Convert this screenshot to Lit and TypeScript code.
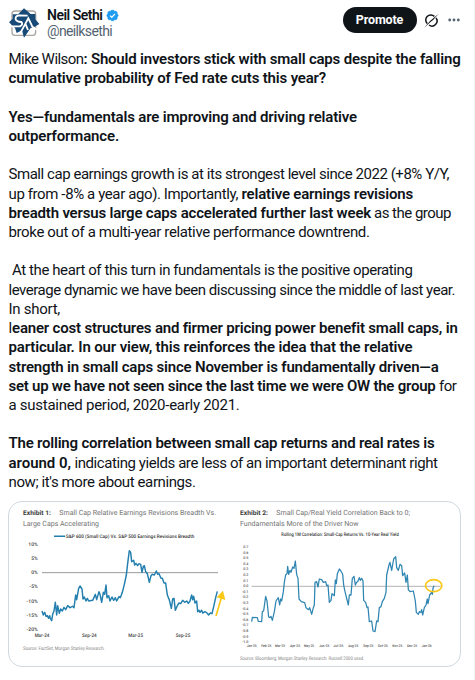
import { LitElement, html, svg, css } from "lit";
import { customElement } from "lit/decorators.js";

interface Run { t: string; w: number; b?: boolean; gap?: number }

const BODY = 15;
const BOLD = 600;
const FAMILY = 'Roboto, "Liberation Sans", sans-serif';
const pen = document.createElement("canvas").getContext("2d")!;

/** Letter spacing that sets a run to the given measure. */
function tracking(text: string, width: number, size: number, weight: number): string {
  pen.font = `${weight} ${size}px ${FAMILY}`;
  const natural = pen.measureText(text).width;
  return ((width - natural) / text.length).toFixed(3) + "px";
}

const LINES: Run[][] = [
  [{ t: "Mike Wilson", w: 75 }, { t: ": Should investors stick with small caps despite the falling", w: 377, b: true }],
  [{ t: "cumulative probability of Fed rate cuts this year?", w: 317.5, b: true }],
  [],
  [{ t: "Yes—fundamentals are improving and driving relative", w: 348.5, b: true }],
  [{ t: "outperformance.", w: 110.5, b: true }],
  [],
  [{ t: "Small cap earnings growth is at its strongest level since 2022 (+8% Y/Y,", w: 440.5 }],
  [{ t: "up from -8% a year ago). Importantly,", w: 229.5 }, { t: "relative earnings revisions", w: 171.5, b: true, gap: 3.5 }],
  [{ t: "breadth versus large caps accelerated further last week", w: 362.5, b: true }, { t: "as the group", w: 77, gap: 3 }],
  [{ t: "broke out of a multi-year relative performance downtrend.", w: 361 }],
  [],
  [{ t: "At the heart of this turn in fundamentals is the positive operating", w: 400.5, gap: 3.5 }],
  [{ t: "leverage dynamic we have been discussing since the middle of last year.", w: 446.5 }],
  [{ t: "In short,", w: 51.5 }],
  [{ t: "l", w: 3.5 }, { t: "eaner cost structures and firmer pricing power benefit small caps, in", w: 445, b: true }],
  [{ t: "particular. In our view, this reinforces the idea that the relative", w: 404, b: true }],
  [{ t: "strength in small caps since November is fundamentally driven—a", w: 430, b: true }],
  [{ t: "set up we have not seen since the last time we were OW the group", w: 427, b: true }, { t: "for", w: 17.5, gap: 3.5 }],
  [{ t: "a sustained period, 2020-early 2021.", w: 231 }],
  [],
  [{ t: "The rolling correlation between small cap returns and real rates is", w: 426, b: true }],
  [{ t: "around 0,", w: 62.5, b: true }, { t: "indicating yields are less of an important determinant right", w: 363, gap: 3.5 }],
  [{ t: "now; it's more about earnings.", w: 187 }],
];

const BREADTH =
  "126,348 130,360 134,352 138,364 142,362 146,370 149,362 151,370 155,377 158,358 162,348 166,322 170,360 173,332 178,355 182,342 187,348 192,337 197,344 203,332 210,338 218,334 222,338 227,300 230,314 236,280 240,273 246,282 249,312 253,306 258,318 262,310 266,318 278,316 286,298 290,314 297,290 300,298 305,322 310,292 314,298 318,270 321,308 326,302 330,318 336,306 341,316 346,308 350,318 357,305 361,308 367,292 373,268 379,240 383,205 388,167 392,172 395,200 401,196 404,210 408,205 413,212 417,206 422,208 426,232 430,214 433,212 437,230 442,236 448,262 453,242 457,238 463,240 469,228 473,238 477,236 483,250 487,250 492,264 497,264 502,300 508,315 514,340 518,312 522,310 526,346 532,332 537,324 542,326 548,316 554,322 560,318 565,325 570,318 575,300 578,314 581,304 585,324 590,318 593,350 597,346 600,352 605,346 608,354 615,350 621,354 626,360 631,354 636,356 641,335 647,308 652,289";

const CORRELATION =
  "755,380 757,367 772,368 775,379 785,380 787,350 791,347 797,304 801,318 806,366 810,368 813,364 817,376 823,350 828,318 835,308 839,330 842,312 845,318 850,290 853,262 857,240 861,236 863,214 866,238 870,226 873,232 878,216 882,220 886,198 890,238 894,250 897,312 904,320 914,323 918,338 926,344 929,338 935,358 940,338 943,330 945,262 950,260 954,276 958,252 965,254 970,262 977,260 980,272 984,270 988,322 993,316 996,296 1003,302 1006,255 1009,266 1012,236 1018,222 1024,230 1028,238 1031,270 1035,290 1045,330 1048,300 1053,300 1057,250 1062,244 1066,270 1070,262 1074,258 1078,248 1081,256 1085,250 1089,258 1091,316 1097,322 1101,338 1104,336 1108,380 1115,378 1119,408 1125,410 1130,378 1134,380 1138,338 1143,335 1147,320 1153,310 1158,292 1160,240 1167,210 1170,202 1175,226 1181,192 1187,185 1190,218 1195,226 1200,208 1205,212 1208,242 1214,234 1218,262 1222,240 1225,284 1230,290 1240,288 1246,318 1249,352 1255,358 1258,350 1263,352 1265,344 1268,360 1273,338 1278,330 1282,312 1284,326 1289,300 1295,292 1297,298 1299,280 1302,272";

const MONTHS: [string, number][] = [
  ["Jan-25", 755], ["Feb-25", 799], ["Mar-25", 840], ["Apr-25", 885], ["May-25", 927], ["Jun-25", 973], ["Jul-25", 1015],
  ["Aug-25", 1060], ["Sep-25", 1105], ["Oct-25", 1148], ["Nov-25", 1192], ["Dec-25", 1236], ["Jan-26", 1280],
];

@customElement("exhibit-charts")
class ExhibitCharts extends LitElement {
  static styles = css`
    :host { display: block; }
    svg { display: block; width: 100%; height: 100%; }
    text { font-family: Roboto, "Liberation Sans", sans-serif; text-rendering: geometricPrecision; fill: #444; }
    .title { font-size: 21.5px; fill: #737373; }
    .lead { font-size: 19.5px; font-weight: 700; fill: #3c3c3c; }
    .key { font-size: 14.5px; font-weight: 500; fill: #333; }
    .tick { font-size: 15px; font-weight: 500; fill: #444; }
    .fine { font-size: 11px; font-weight: 500; fill: #555; }
    .note { font-size: 15px; fill: #858585; }
    .end { text-anchor: end; }
    .mid { text-anchor: middle; }
    .zero { stroke: #999; stroke-width: 3; }
    .zero.thin { stroke: #b4b4b4; }
    .series { fill: none; stroke: #227fae; stroke-width: 4.4; stroke-linejoin: round; }
    .series.thin { stroke: #3086b2; stroke-width: 3.8; }
    .mark { fill: none; stroke: #fac917; stroke-width: 5; }
    .head { fill: #fac917; }
  `;

  private label(cls: string, x: number, y: number, len: number, t: string) {
    return svg`<text class=${cls} x=${x} y=${y} textLength=${len} lengthAdjust="spacingAndGlyphs">${t}</text>`;
  }

  render() {
    return html`<svg viewBox="27 21 1353 492" preserveAspectRatio="none">
      ${this.label("lead", 69, 59, 84, "Exhibit 1:")}
      ${this.label("title", 178, 60, 470, "Small Cap Relative Earnings Revisions Breadth Vs.")}
      ${this.label("title", 69, 94, 228, "Large Caps Accelerating")}
      <line class="series" x1="162" y1="124" x2="196" y2="124" />
      ${this.label("key", 198, 128, 385, "S&P 600 (Small Cap) Vs. S&P 500 Earnings Revisions Breadth")}
      ${["10%", "5%", "0%", "-5%", "-10%", "-15%", "-20%"].map(
        (t, i) => svg`<text class="tick end" x="113" y=${152 + i * 42.7}>${t}</text>`)}
      <line class="zero" x1="126" y1="233" x2="654" y2="233" />
      <polyline class="series" points=${BREADTH} />
      ${[["Mar-24", 126], ["Sep-24", 268], ["Mar-25", 407], ["Sep-25", 549]].map(
        ([t, x]) => svg`<text class="tick mid" x=${x} y="427" textLength="44" lengthAdjust="spacingAndGlyphs">${t}</text>`)}
      <line class="mark" x1="648" y1="363" x2="664" y2="308" />
      <polygon class="head" points="669,287 676,315 650,307" />
      ${this.label("note", 69, 464, 245, "Source: FactSet, Morgan Stanley Research.")}

      ${this.label("lead", 720, 59, 84, "Exhibit 2:")}
      ${this.label("title", 829, 60, 401, "Small Cap/Real Yield Correlation Back to 0;")}
      ${this.label("title", 720, 94, 356, "Fundamentals More of the Driver Now")}
      ${this.label("key", 844, 124, 352, "Rolling 1M Correlation: Small-Cap Returns Vs. 10-Year Real Yield")}
      ${Array.from({ length: 18 }, (_, i) =>
        svg`<text class="fine end" x="745" y=${159 + i * 16.8}>${(0.7 - i / 10).toFixed(1).replace("-0.0", "0.0")}</text>`)}
      <line class="zero thin" x1="755" y1="274" x2="1323" y2="274" />
      <polyline class="series thin" points=${CORRELATION} />
      ${MONTHS.map(([t, x]) => svg`<text class="fine mid" x=${x} y="457" textLength="30" lengthAdjust="spacingAndGlyphs">${t}</text>`)}
      <ellipse class="mark" cx="1301" cy="272" rx="24.5" ry="18" />
      ${this.label("note", 720, 494, 373, "Source: Bloomberg, Morgan Stanley Research. Russell 2000 used.")}
    </svg>`;
  }
}

@customElement("app-root")
class AppRoot extends LitElement {
  static styles = css`
    :host {
      display: block; box-sizing: border-box; width: 475px; height: 680px; overflow: hidden;
      background: #fff; border-right: 1px solid #eff3f4; color: #0f1419;
      font-family: Roboto, "Liberation Sans", sans-serif;
    }
    header { display: flex; height: 50px; padding-left: 8px; box-sizing: border-box; }
    .avatar { width: 32px; height: 32px; margin-top: 7px; flex: none; }
    .who { display: flex; flex-direction: column; margin: 7px 0 0 7px; font-size: 14px; line-height: 16px; white-space: nowrap; }
    .name { display: flex; gap: 3px; align-items: center; font-weight: 600; height: 16px; }
    .name svg { width: 13px; height: 13px; }
    .handle { color: #536471; height: 16px; }
    .actions { display: flex; align-items: center; margin-left: auto; margin-right: 14px; height: 26px; margin-top: 7px; }
    .promote {
      width: 74px; height: 26px; border-radius: 13px; border: 0; padding: 0; background: #0f1419; color: #fff;
      display: flex; align-items: center; justify-content: center; font: 700 12.5px/26px Roboto, sans-serif;
    }
    .grok { width: 15px; height: 15px; margin-left: 7.5px; }
    .more { width: 12px; height: 4px; margin-left: 9px; }
    .line { display: flex; height: 19.23px; line-height: 19.23px; font-size: 15px; white-space: pre; padding-left: 8.5px; }
    .run { flex: none; }
    .b { font-weight: 600; }
    .media {
      margin: 8.7px 0 0 8px; box-sizing: border-box; width: 453px; height: 166px;
      border: 1px solid #cfd9de; border-radius: 14px; overflow: hidden;
    }
    .media exhibit-charts { height: 164px; }
  `;

  private run(r: Run) {
    const ls = tracking(r.t, r.w, BODY, r.b ? BOLD : 400);
    return html`<span class="run ${r.b ? "b" : ""}" style="letter-spacing:${ls};margin-left:${r.gap ?? 0}px">${r.t}</span>`;
  }

  render() {
    return html`
      <header>
        <svg class="avatar" viewBox="24 21 96 96">
          <rect x="36" y="33" width="71" height="73" rx="9" fill="#fff" stroke="#aaa6a1" stroke-width="4" />
          <path d="M72 25L92 42H106V58L118 72L103 81L92 84L72 113L66 91L50 99L45 84L27 67L38 56V43H54Z" fill="#184a78" />
          <path d="M83 47L57 46Q45 48 47 58Q50 65 64 66Q71 73 60 79L33 79" fill="none" stroke="#fff" stroke-width="5.5" />
          <path d="M60 101L73 77L85 55L97 80L111 89M77 73L84 90" fill="none" stroke="#fff" stroke-width="5.5" />
        </svg>
        <div class="who">
          <div class="name">
            <span style="letter-spacing:${tracking("Neil Sethi", 55.5, 14, BOLD)}">Neil Sethi</span>
            <svg viewBox="0 0 22 22"><path fill="#1d9bf0" d="M20.4 11c0-1.2-.7-2.3-1.8-2.9.4-1.2.2-2.5-.6-3.3-.9-.9-2.1-1.1-3.3-.7C14.2 3 13.2 2.2 11 2.2S7.9 3 7.3 4.100c-1.2-.4-2.4-.2-3.3.7-.8.8-1 2.1-.6 3.3C2.3 8.7 1.6 9.8 1.6 11s.7 2.3 1.8 2.9c-.4 1.2-.2 2.5.6 3.3.9.9 2.1 1.1 3.3.7.6 1.1 1.6 1.9 3.7 1.9s3.200-.8 3.700-1.900c1.200.4 2.400.2 3.300-.7.800-.8 1-2.100.6-3.300 1.100-.6 1.800-1.700 1.800-2.900z" stroke="#1d9bf0" stroke-width="1.5" /><path d="M6.8 11.2l3 3 5.4-6" fill="none" stroke="#fff" stroke-width="2.2" /></svg>
          </div>
          <span class="handle" style="letter-spacing:${tracking("@neilksethi", 65, 14, 400)}">@neilksethi</span>
        </div>
        <div class="actions">
          <button class="promote"><span style="letter-spacing:${tracking("Promote", 47.5, 12.5, 700)}">Promote</span></button>
          <svg class="grok" viewBox="0 0 45 45" fill="none" stroke="#0f1419">
            <path d="M31 10A15 15 0 0 0 10 32M15 36A15 15 0 0 0 36 15" stroke-width="4.5" />
            <path d="M1 44L18 24L44 2L28 20L17 29Z" fill="#0f1419" stroke="none" />
          </svg>
          <svg class="more" viewBox="0 0 12 4" fill="#536471"><circle cx="1.7" cy="2" r="1.4" /><circle cx="6" cy="2" r="1.4" /><circle cx="10.3" cy="2" r="1.4" /></svg>
        </div>
      </header>
      <main>${LINES.map((l) => html`<div class="line">${l.map((r) => this.run(r))}</div>`)}</main>
      <div class="media"><exhibit-charts></exhibit-charts></div>
    `;
  }
}
